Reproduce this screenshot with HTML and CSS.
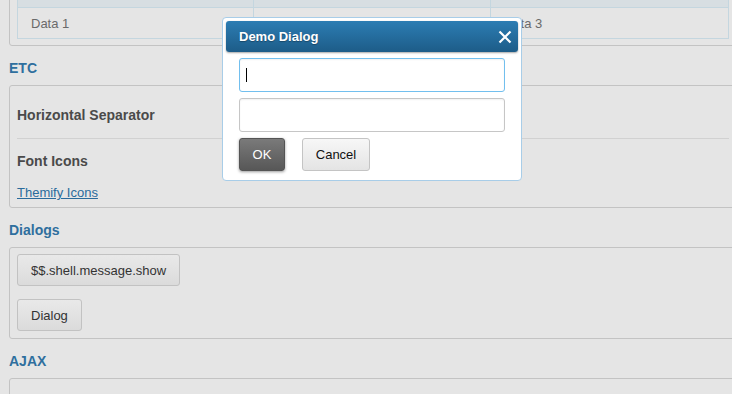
FILE: index.html
```html
<!DOCTYPE html>
<html lang="en">
<head>
    <meta charset="UTF-8">
    <meta name="viewport" content="width=device-width, initial-scale=1.0">
    <title>Demo</title>
    <link rel="stylesheet" href="styles.css">
</head>
<body>
    <div class="page">
        <div class="panel panel-table">
            <table class="grid">
                <colgroup><col class="col-a"><col class="col-b"><col></colgroup>
                <tr class="grid-head"><th></th><th></th><th></th></tr>
                <tr><td>Data 1</td><td>Data 2</td><td>Data 3</td></tr>
            </table>
        </div>

        <h3 class="section">ETC</h3>
        <div class="panel panel-etc">
            <h4 class="item-title">Horizontal Separator</h4>
            <hr class="separator">
            <h4 class="item-title">Font Icons</h4>
            <p class="links"><a href="#">Themify Icons</a></p>
        </div>

        <h3 class="section">Dialogs</h3>
        <div class="panel panel-buttons">
            <button class="btn">$$.shell.message.show</button>
            <button class="btn">Dialog</button>
        </div>

        <h3 class="section">AJAX</h3>
        <div class="panel panel-empty"></div>
    </div>

    <div class="dialog">
        <div class="dialog-head">
            <span class="dialog-title">Demo Dialog</span>
            <svg class="dialog-close" width="14" height="14" viewBox="0 0 14 14">
                <path d="M1.5 1.5 L12.5 12.5 M12.5 1.5 L1.5 12.5" stroke="#fff" stroke-width="2.2" fill="none"/>
            </svg>
        </div>
        <div class="dialog-body">
            <div class="field field-focus"><span class="caret"></span></div>
            <div class="field"></div>
            <div class="dialog-buttons">
                <button class="ok-btn">OK</button>
                <button class="cancel-btn">Cancel</button>
            </div>
        </div>
    </div>
</body>
</html>
```

FILE: styles.css
```css
html, body {
    overflow: hidden;
}
body {
    font-family: "Liberation Sans", Arial, sans-serif;
    font-size: 13px;
    background-color: #e5e5e5;
    color: #333;
    margin: 0;
    padding: 0;
}
.page {
    width: 728px;
    padding-left: 9px;
    margin-top: -31px;
}
.panel {
    border: 1px solid #c3c3c3;
    border-radius: 3px;
    padding: 8px 7px;
}
.panel-table {
    padding: 8px 7px 6px;
}
.grid {
    width: 100%;
    border-collapse: collapse;
    table-layout: fixed;
    border: 1px solid #bdd3de;
}
.col-a {
    width: 236px;
}
.col-b {
    width: 237px;
}
.grid th, .grid td {
    border: 1px solid #c4d6df;
    height: 30px;
    padding: 0;
    text-indent: 13px;
    text-align: left;
}
.grid-head th {
    height: 28px;
    background-color: #d7dee2;
}
.grid td {
    color: #6a6a6a;
    font-size: 13px;
}
.section {
    margin: 14px 0 9px;
    font-size: 14px;
    line-height: 16px;
    font-weight: bold;
    color: #2f6f9e;
}
.panel-etc {
    padding-bottom: 7px;
}
.item-title {
    margin: 13px 0 0;
    font-size: 14px;
    line-height: 16px;
    font-weight: bold;
    color: #4a4a4a;
}
.separator {
    border: 0;
    border-top: 1px solid #d1d1d1;
    height: 0;
    margin: 15px 0 14px;
}
.links {
    margin: 16px 0 0;
    line-height: 15px;
}
.links a {
    color: #2a6b9c;
    text-decoration: underline;
}
.panel-buttons {
    display: flex;
    flex-direction: column;
    align-items: flex-start;
    gap: 13px;
    padding: 6px 7px 7px;
}
.btn {
    font-family: inherit;
    font-size: 13px;
    color: #333;
    height: 32px;
    padding: 0 13px;
    border: 1px solid #c2c2c2;
    border-radius: 3px;
    background: linear-gradient(#e9e9e9, #dbdbdb);
}
.panel-empty {
    height: 60px;
}

.dialog {
    position: absolute;
    left: 222px;
    top: 17px;
    width: 300px;
    height: 164px;
    box-sizing: border-box;
    background-color: #fff;
    border: 1px solid #a8cde8;
    border-radius: 4px;
    padding: 3px;
}
.dialog-head {
    height: 31px;
    border-radius: 3px;
    background: linear-gradient(#2c7db3, #1d5c88);
    box-shadow: 0 1px 2px rgba(0,0,0,0.35);
    display: flex;
    align-items: center;
    justify-content: space-between;
    padding: 0 6px 0 13px;
}
.dialog-title {
    color: #fff;
    font-size: 13px;
    font-weight: bold;
    text-shadow: 0 1px 1px rgba(0,0,0,0.3);
}
.dialog-body {
    padding: 6px 13px 0;
}
.field {
    position: relative;
    height: 34px;
    box-sizing: border-box;
    border: 1px solid #c6c6c6;
    border-radius: 3px;
    box-shadow: inset 0 1px 2px rgba(0,0,0,0.06);
    margin-bottom: 6px;
}
.field-focus {
    border-color: #72bfee;
}
.caret {
    position: absolute;
    left: 6px;
    top: 9px;
    width: 1px;
    height: 14px;
    background-color: #000;
}
.dialog-buttons {
    display: flex;
    gap: 17px;
}
.ok-btn, .cancel-btn {
    font-family: inherit;
    font-size: 13px;
    height: 33px;
    border-radius: 3px;
    cursor: pointer;
}
.ok-btn {
    width: 46px;
    color: #fff;
    border: 1px solid #545454;
    background: linear-gradient(#7a7a7a, #575757);
    box-shadow: 0 1px 3px rgba(0,0,0,0.4);
}
.cancel-btn {
    width: 68px;
    color: #111;
    border: 1px solid #c4c4c4;
    background: linear-gradient(#f7f7f7, #e4e4e4);
}
```
